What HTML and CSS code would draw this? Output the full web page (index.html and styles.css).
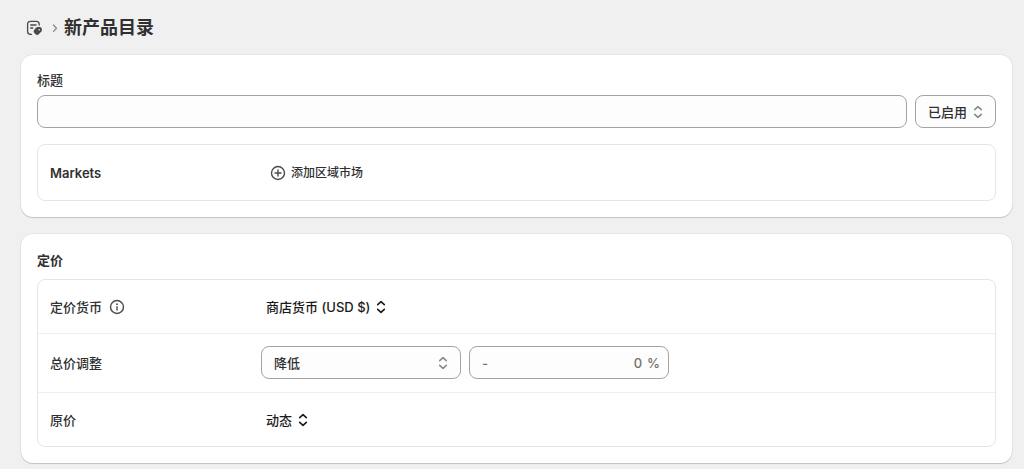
FILE: index.html
```html
<!DOCTYPE html>
<html lang="zh-CN">
<head>
    <meta charset="UTF-8">
    <meta name="viewport" content="width=device-width, initial-scale=1.0">
    <title>新产品目录</title>
    <link rel="stylesheet" href="styles.css">
</head>
<body>
    <header class="page-header">
        <svg class="catalog-icon" viewBox="0 0 16 16" width="16" height="16" fill="none" stroke="currentColor" stroke-width="1.3" stroke-linecap="round" stroke-linejoin="round" aria-hidden="true">
            <path d="M5.5 14.3H4.4C2.6 14.3 1.6 13.2 1.6 11.6V4.2C1.6 2.4 2.8 1.3 4.5 1.3H10.3C12.2 1.3 13.2 2.4 13.2 4.2V5"/>
            <path d="M4.7 5H10M4.7 8H6.800"/>
            <path d="M11.6 7.600H13.6Q15.200 7.600 15.200 9.200V10.200Q15.200 10.900 14.700 11.400L12.300 13.800Q11.200 14.800 10.100 13.800L8.800 12.500Q7.700 11.400 8.800 10.200L10.500 8.200Q11 7.600 11.600 7.600Z" fill="currentColor"/>
            <circle class="tag-hole" cx="13.200" cy="9.700" r="0.800"/>
        </svg>
        <svg class="crumb-icon" viewBox="0 0 6 10" width="6" height="10" fill="none" stroke="currentColor" stroke-width="1.3" stroke-linecap="round" stroke-linejoin="round" aria-hidden="true">
            <path d="M1.5 2L4.5 5.2L1.5 8.4"/>
        </svg>
        <h1>新产品目录</h1>
    </header>

    <main class="cards">
        <section class="card">
            <label class="field-label" for="title">标题</label>
            <div class="title-row">
                <input class="control title-input" type="text" id="title">
                <div class="select-wrap status-select">
                    <select class="control" aria-label="状态">
                        <option>已启用</option>
                    </select>
                    <svg class="chevrons" viewBox="0 0 10 14" width="10" height="14" aria-hidden="true"><path d="M1.7 4.6L5 1.6L8.3 4.6M1.7 9.4L5 12.4L8.3 9.4"/></svg>
                </div>
            </div>
            <div class="box">
                <div class="row market-row">
                    <span class="row-label market-label">Markets</span>
                    <button class="add-btn" type="button">
                        <svg viewBox="0 0 16 16" width="16" height="16" fill="none" stroke="currentColor" stroke-width="1.4" stroke-linecap="round" aria-hidden="true">
                            <circle cx="8" cy="8" r="6.5"/>
                            <path d="M8 5V11M5 8H11"/>
                        </svg>
                        添加区域市场
                    </button>
                </div>
            </div>
        </section>

        <section class="card">
            <h2>定价</h2>
            <div class="box">
                <div class="row">
                    <span class="row-label">定价货币
                        <svg viewBox="0 0 16 16" width="16" height="16" fill="none" stroke="currentColor" stroke-width="1.4" stroke-linecap="round" aria-hidden="true">
                            <circle cx="8" cy="8" r="6.5"/>
                            <path d="M8 7.7V11"/>
                            <path d="M8 5.2V5.2" stroke-width="1.8"/>
                        </svg>
                    </span>
                    <button class="text-btn" type="button">商店货币 (USD $)
                        <svg class="chevrons dark" viewBox="0 0 10 14" width="10" height="14" aria-hidden="true"><path d="M1.7 4.6L5 1.6L8.3 4.6M1.7 9.4L5 12.4L8.3 9.4"/></svg>
                    </button>
                </div>
                <div class="row">
                    <label class="row-label" for="adjust">总价调整</label>
                    <div class="adjust">
                        <div class="select-wrap adjust-field">
                            <select class="control" id="adjust">
                                <option>降低</option>
                            </select>
                            <svg class="chevrons" viewBox="0 0 10 14" width="10" height="14" aria-hidden="true"><path d="M1.7 4.6L5 1.6L8.3 4.6M1.7 9.4L5 12.4L8.3 9.4"/></svg>
                        </div>
                        <div class="control percent adjust-field">
                            <span>-</span>
                            <input type="text" inputmode="decimal" placeholder="0" aria-label="调整百分比">
                            <span>%</span>
                        </div>
                    </div>
                </div>
                <div class="row">
                    <span class="row-label">原价</span>
                    <button class="text-btn" type="button">动态
                        <svg class="chevrons dark" viewBox="0 0 10 14" width="10" height="14" aria-hidden="true"><path d="M1.7 4.6L5 1.6L8.3 4.6M1.7 9.4L5 12.4L8.3 9.4"/></svg>
                    </button>
                </div>
            </div>
        </section>
    </main>
</body>
</html>
```
FILE: styles.css
```css
* {
    box-sizing: border-box;
}
body {
    margin: 0;
    padding: 16px 12px 6px 21px;
    background: #f0f0f0;
    color: #303030;
    font-family: Inter, "Noto Sans CJK SC", sans-serif;
    font-size: 13px;
    font-weight: 500;
    line-height: 20px;
}
h1, h2 {
    margin: 0;
    font-weight: 700;
}
h1 {
    font-size: 18px;
    line-height: 24px;
}
h2 {
    margin-bottom: 9px;
    font-size: 13px;
    line-height: 20px;
}
button, input, select {
    font: inherit;
    color: inherit;
}
button {
    display: flex;
    align-items: center;
    border: none;
    background: none;
    cursor: pointer;
}
svg {
    flex: none;
}
.page-header {
    display: flex;
    align-items: center;
    padding-left: 5px;
    margin-bottom: 15px;
}
.catalog-icon {
    color: #4a4a4a;
}
.tag-hole {
    fill: #f0f0f0;
    stroke: none;
}
.crumb-icon {
    margin: 0 6px 0 10px;
    color: #8a8a8a;
}
.cards {
    display: flex;
    flex-direction: column;
    gap: 17px;
}
.card {
    padding: 16px;
    background: #fff;
    border-radius: 12px;
    box-shadow: 0 0 0 1px rgba(0, 0, 0, 0.04), 0 1px 1px rgba(0, 0, 0, 0.16);
}
.field-label {
    display: block;
    margin-bottom: 6px;
    line-height: 18px;
}
.title-row {
    display: flex;
    gap: 8px;
    margin-bottom: 16px;
}
.control {
    width: 100%;
    height: 33px;
    padding: 0 12px;
    border: 1px solid #a3a3a3;
    border-radius: 8px;
    background: #fdfdfd;
    appearance: none;
}
.title-input {
    flex: 1;
    min-width: 0;
}
.select-wrap {
    position: relative;
}
.select-wrap .chevrons {
    position: absolute;
    top: 10px;
    right: 13px;
    pointer-events: none;
}
.status-select {
    width: 81px;
}
.chevrons {
    fill: none;
    stroke: #8a8a8a;
    stroke-width: 1.6;
    stroke-linecap: round;
    stroke-linejoin: round;
}
.chevrons.dark {
    stroke: #1a1a1a;
}
.box {
    border: 1px solid #e6e6e6;
    border-radius: 8px;
}
.row {
    display: flex;
    align-items: center;
    min-height: 53px;
    padding: 0 12px;
}
.row + .row {
    min-height: 54px;
    border-top: 1px solid #efefef;
}
.market-row {
    min-height: 55px;
}
.row-label {
    display: flex;
    align-items: center;
    gap: 7px;
    flex: none;
    width: 211px;
}
.row-label svg {
    color: #4a4a4a;
}
.market-label {
    font-weight: 600;
}
.add-btn {
    gap: 5px;
    padding: 4px 9px;
    font-size: 12px;
}
.add-btn svg {
    color: #4a4a4a;
}
.text-btn {
    gap: 6px;
    padding: 5px;
    color: #1a1a1a;
    font-weight: 500;
}
.adjust {
    display: flex;
    gap: 8px;
    padding: 12px 0 13px;
}
.adjust-field {
    width: 200px;
}
.percent {
    display: flex;
    align-items: center;
    gap: 5px;
    padding: 0 8px 0 12px;
    color: #707070;
}
.percent input {
    flex: 1;
    min-width: 0;
    padding: 0;
    border: none;
    outline: none;
    background: none;
    text-align: right;
}
.percent input::placeholder {
    color: #707070;
}
```
